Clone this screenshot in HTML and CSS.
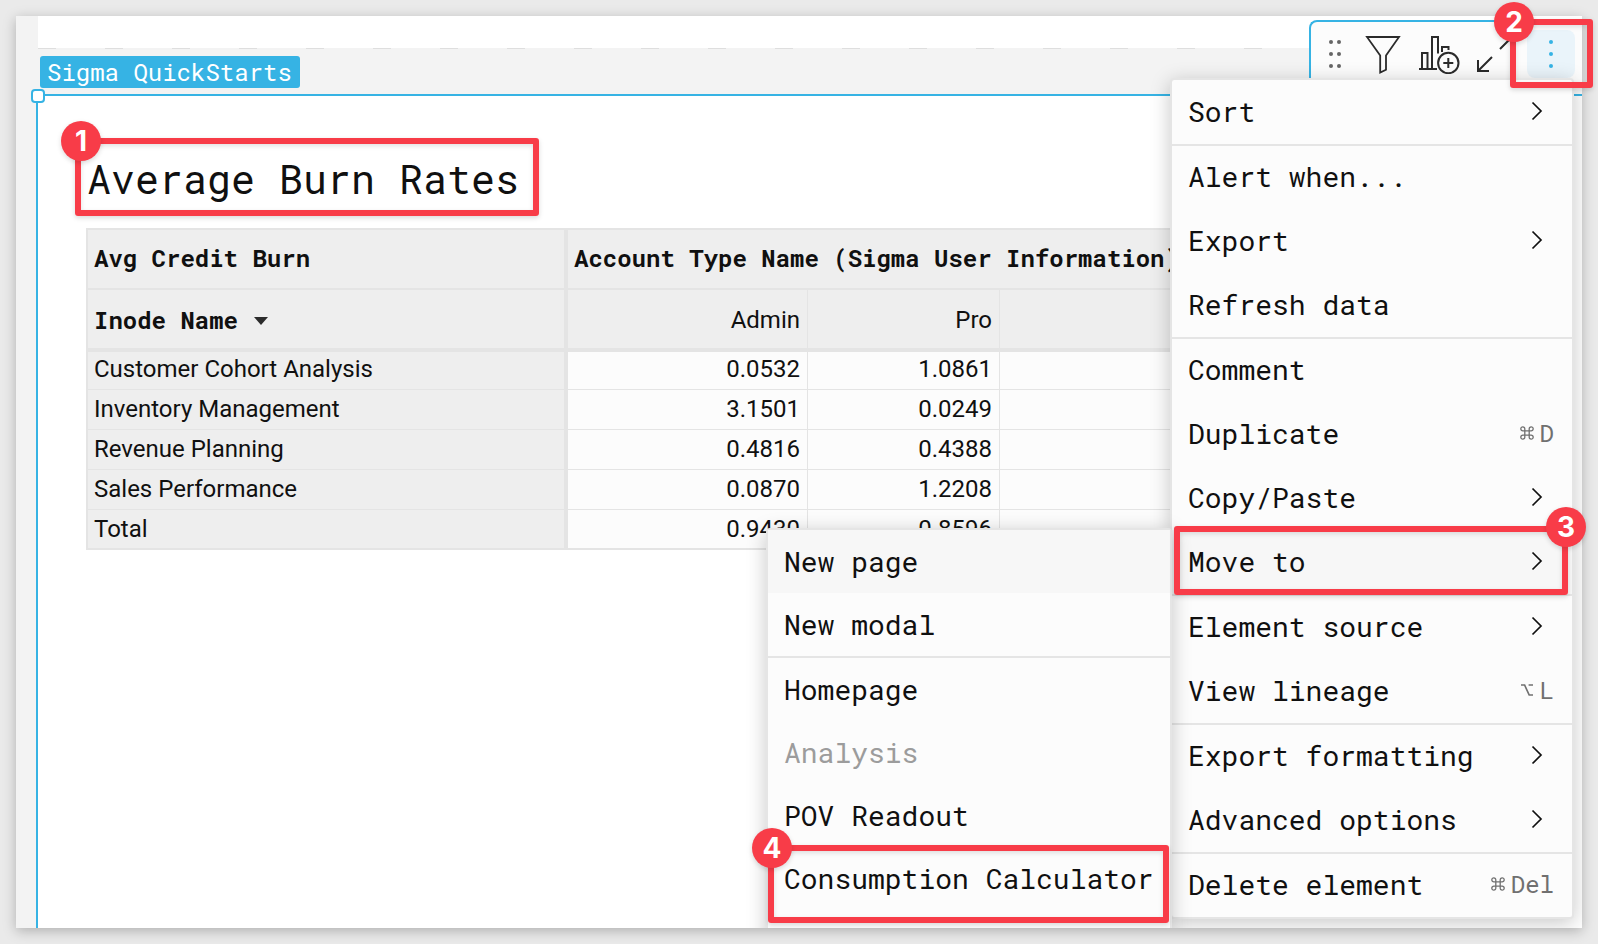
FILE: index.html
```html
<!DOCTYPE html>
<html lang="en">
<head>
<meta charset="utf-8">
<title>Sigma QuickStarts</title>
<link rel="stylesheet" href="styles.css">
</head>
<body>
<svg class="defs" aria-hidden="true">
  <symbol id="chevron" viewBox="0 0 12 20"><path d="M1.5 1.5 10 10l-8.500 8.500" fill="none" stroke="currentColor" stroke-width="1.700"/></symbol>
  <symbol id="command" viewBox="0 0 14 14"><path d="M4.800 4.800V2.900a2 2 0 1 0-2 1.900h8.400a2 2 0 1 0-2-1.900v8.200a2 2 0 1 0 2-1.900H2.800a2 2 0 1 0 2 1.900z" fill="none" stroke="currentColor" stroke-width="1.300"/></symbol>
  <symbol id="option" viewBox="0 0 14 14"><path d="M1 2h3.600l4.600 10H13M8.600 2H13" fill="none" stroke="currentColor" stroke-width="1.700"/></symbol>
</svg>

<main class="frame">
  <div class="strip"></div>
  <div class="dashes"></div>
  <div class="label-row"><span class="label">Sigma QuickStarts</span></div>

  <section class="element">
    <span class="handle"></span>
    <h1 class="title">Average Burn Rates</h1>
    <table class="pivot">
      <colgroup><col class="col-name"><col class="col-admin"><col class="col-pro"><col></colgroup>
      <thead>
        <tr class="head-top"><th scope="col">Avg Credit Burn</th><th scope="colgroup" colspan="3">Account Type Name (Sigma User Information)</th></tr>
        <tr class="head-sub">
          <th scope="col">Inode Name <svg class="caret" viewBox="0 0 14 8" width="14" height="8"><path d="M0 0h14L7 8z" fill="#2b2b2b"/></svg></th>
          <th class="num" scope="col">Admin</th><th class="num" scope="col">Pro</th><th></th>
        </tr>
      </thead>
      <tbody>
        <tr><th scope="row">Customer Cohort Analysis</th><td>0.0532</td><td>1.0861</td><td></td></tr>
        <tr><th scope="row">Inventory Management</th><td>3.1501</td><td>0.0249</td><td></td></tr>
        <tr><th scope="row">Revenue Planning</th><td>0.4816</td><td>0.4388</td><td></td></tr>
        <tr><th scope="row">Sales Performance</th><td>0.0870</td><td>1.2208</td><td></td></tr>
        <tr><th scope="row">Total</th><td>0.9430</td><td>0.8596</td><td></td></tr>
      </tbody>
    </table>
  </section>

  <div class="toolbar">
    <button class="tool drag" aria-label="Drag element">
      <svg width="12" height="28" viewBox="0 0 12 28" fill="#666"><circle cx="2" cy="2" r="2"/><circle cx="10" cy="2" r="2"/><circle cx="2" cy="14" r="2"/><circle cx="10" cy="14" r="2"/><circle cx="2" cy="26" r="2"/><circle cx="10" cy="26" r="2"/></svg>
    </button>
    <button class="tool filter" aria-label="Filter">
      <svg width="36" height="40" viewBox="0 0 36 40" fill="none" stroke="#2b2b2b" stroke-width="1.800"><path d="M2 3h32L21 21.500v14.200L15.200 38.500v-17z"/></svg>
    </button>
    <button class="tool chart" aria-label="Create child element">
      <svg width="42" height="40" viewBox="0 0 42 40" fill="none" stroke="#2b2b2b" stroke-width="2"><path d="M0 35h18M3 35V19h5.500v16M13 35V3h6v16.500M23 18v-5h6.500v3"/><circle cx="29.300" cy="29" r="10.200"/><path d="M24.300 29h10M29.300 24v10"/></svg>
    </button>
    <button class="tool expand" aria-label="Maximize">
      <svg width="38" height="38" viewBox="0 0 38 38" fill="none" stroke="#2b2b2b" stroke-width="2"><path d="M2 25v11h11M2.500 35.500 16 22M24 14 36 2M26 2h10v10"/></svg>
    </button>
    <button class="tool more" aria-label="More options">
      <svg width="4" height="28" viewBox="0 0 4 28" fill="#36b3e4"><circle cx="2" cy="2" r="2"/><circle cx="2" cy="14" r="2"/><circle cx="2" cy="26" r="2"/></svg>
    </button>
  </div>

  <nav class="menu main-menu" aria-label="Element menu">
    <button class="item">Sort<svg class="chev"><use href="#chevron"/></svg></button>
    <hr>
    <button class="item">Alert when...</button>
    <button class="item">Export<svg class="chev"><use href="#chevron"/></svg></button>
    <button class="item">Refresh data</button>
    <hr>
    <button class="item">Comment</button>
    <button class="item">Duplicate<span class="keys"><svg><use href="#command"/></svg>D</span></button>
    <button class="item">Copy/Paste<svg class="chev"><use href="#chevron"/></svg></button>
    <button class="item active">Move to<svg class="chev"><use href="#chevron"/></svg></button>
    <hr>
    <button class="item">Element source<svg class="chev"><use href="#chevron"/></svg></button>
    <button class="item">View lineage<span class="keys"><svg><use href="#option"/></svg>L</span></button>
    <hr>
    <button class="item">Export formatting<svg class="chev"><use href="#chevron"/></svg></button>
    <button class="item">Advanced options<svg class="chev"><use href="#chevron"/></svg></button>
    <hr>
    <button class="item">Delete element<span class="keys"><svg><use href="#command"/></svg>Del</span></button>
  </nav>

  <nav class="menu sub-menu" aria-label="Move to">
    <button class="item active">New page</button>
    <button class="item">New modal</button>
    <hr>
    <button class="item">Homepage</button>
    <button class="item" disabled>Analysis</button>
    <button class="item">POV Readout</button>
    <button class="item">Consumption Calculator</button>
  </nav>
</main>

<div class="callout callout-title"><span class="badge">1</span></div>
<div class="callout callout-more"><span class="badge">2</span></div>
<div class="callout callout-move"><span class="badge badge-right">3</span></div>
<div class="callout callout-target"><span class="badge">4</span></div>
</body>
</html>
```
FILE: styles.css
```css
:root {
  --mono: "Roboto Mono", "DejaVu Sans Mono", monospace;
  --sans: Roboto, sans-serif;
  --blue: #36b3e4;
  --red: #f83c48;
  --line: #e4e4e4;
  --ink: #101010;
}

* { box-sizing: border-box; }

body {
  position: relative;
  margin: 0;
  min-height: 100vh;
  padding: 16px;
  display: flex;
  background: #eaeaea;
  color: var(--ink);
  font-family: var(--mono);
  overflow: hidden;
}

button {
  margin: 0;
  padding: 0;
  border: 0;
  background: none;
  color: inherit;
  font: inherit;
}

.defs { position: absolute; width: 0; height: 0; }

.frame {
  position: relative;
  flex: 1;
  min-width: 0;
  display: flex;
  flex-direction: column;
  overflow: hidden;
  background: #f3f3f3;
  box-shadow: 0 3px 12px rgba(0, 0, 0, 0.25);
}

.strip { height: 32px; margin-left: 22px; background: #fff; }

.dashes {
  height: 1px;
  margin-left: 22px;
  background: repeating-linear-gradient(90deg, #dedede 0 18px, transparent 18px 67px);
}

.label-row { height: 45px; padding: 7px 0 0 24px; }

.label {
  display: inline-block;
  padding: 0 8px 0 7px;
  border-radius: 3px;
  background: var(--blue);
  color: #fff;
  font-size: 24px;
  line-height: 32px;
}

.element {
  position: relative;
  flex: 1;
  margin-left: 20px;
  padding: 55px 12px 0 48px;
  border-top: 2px solid var(--blue);
  border-left: 2px solid var(--blue);
  background: #fff;
}

.handle {
  position: absolute;
  top: -7px;
  left: -7px;
  width: 14px;
  height: 14px;
  border: 2px solid var(--blue);
  border-radius: 4px;
  background: #fff;
}

.title {
  margin: 0 0 21px;
  padding-left: 1px;
  font-size: 40px;
  font-weight: 400;
  line-height: 56px;
}

/* Pivot table */
.pivot {
  width: 100%;
  table-layout: fixed;
  border-collapse: separate;
  border-spacing: 0;
  border: 2px solid var(--line);
  border-right: 0;
  font-family: var(--sans);
  font-size: 24px;
  line-height: 36px;
}
.col-name { width: 480px; }
.col-admin { width: 240px; }
.col-pro { width: 192px; }

.pivot th, .pivot td {
  height: 40px;
  padding: 1px 7px 2px;
  border-bottom: 1px solid var(--line);
  border-right: 1px solid var(--line);
  font-weight: 400;
  text-align: right;
  white-space: nowrap;
  vertical-align: top;
}
.pivot th { background: #eee; }
.pivot td { background: #fcfcfc; }
.pivot tr > th:first-child {
  padding-left: 6px;
  border-right: 4px solid var(--line);
  text-align: left;
}
.pivot thead th {
  height: 60px;
  vertical-align: middle;
}
.pivot .head-top th {
  padding-top: 0;
  border-bottom-width: 2px;
  font-family: var(--mono);
  font-weight: 700;
  text-align: left;
}
.pivot .head-top th:last-child { padding-left: 6px; }
.pivot .head-sub th { height: 62px; padding-top: 4px; border-bottom-width: 4px; }
.pivot .head-sub th:first-child { font-family: var(--mono); font-weight: 700; }
.pivot tbody tr:first-child > * { height: 38px; padding-top: 0; padding-bottom: 1px; line-height: 35px; }
.pivot tbody tr:last-child > * { height: 38px; padding-bottom: 1px; border-bottom: 0; }
.caret { margin-left: 2px; vertical-align: 4px; }

/* Element toolbar */
.toolbar {
  position: absolute;
  top: 4px;
  right: 0;
  width: 273px;
  height: 74px;
  display: flex;
  align-items: flex-start;
  padding: 8px 7px 0 18px;
  border-top: 2px solid var(--blue);
  border-left: 2px solid var(--blue);
  border-radius: 8px 0 0 0;
  background: #fcfcfc;
}
.tool {
  height: 48px;
  display: flex;
  align-items: center;
}
.filter { margin-left: 24px; }
.chart { margin-left: 18px; }
.expand { margin-left: 15px; }
.more {
  width: 48px;
  margin-left: auto;
  justify-content: center;
  border-radius: 8px;
  background: #eaf4fa;
}

/* Menus */
.menu {
  position: absolute;
  display: flex;
  flex-direction: column;
  border: 2px solid #e5e5e5;
  border-radius: 4px;
  background: #fcfcfc;
  background-clip: padding-box;
  box-shadow: 0 4px 20px rgba(0, 0, 0, 0.22);
  font-size: 28px;
}
.menu hr {
  position: relative;
  width: 100%;
  height: 2px;
  margin: 0;
  border: 0;
  background: #e5e5e5;
}
.item {
  height: 64px;
  display: flex;
  align-items: center;
  justify-content: space-between;
  padding: 0 18px 2px 16px;
  text-align: left;
  white-space: nowrap;
}
.item.active { background: #f7f7f7; }
.item:disabled { color: #9c9c9c; }
.main-menu { top: 62px; right: 8px; width: 404px; }
.main-menu hr { margin-bottom: -1px; }
.sub-menu { top: 512px; right: 410px; width: 406px; height: 480px; }
.sub-menu .item { height: 63px; padding-bottom: 0; }
.chev { width: 12px; height: 20px; margin-right: 11px; }
.keys {
  display: flex;
  align-items: center;
  gap: 6px;
  color: #707070;
  font-size: 24px;
}
.keys svg { width: 14px; height: 14px; }

/* Numbered callouts */
.callout {
  position: absolute;
  border: 6px solid var(--red);
  border-radius: 3px;
  box-shadow: 0 2px 5px rgba(0, 0, 0, 0.15), inset 0 2px 5px rgba(0, 0, 0, 0.12);
}
.callout-title { top: 138px; left: 75px; width: 464px; height: 78px; }
.callout-more { top: 19px; right: 5px; width: 83px; height: 69px; }
.callout-move { top: 526px; right: 30px; width: 394px; height: 69px; }
.callout-target { top: 845px; right: 429px; width: 401px; height: 78px; }
.badge {
  position: absolute;
  top: -23px;
  left: -22px;
  width: 40px;
  height: 40px;
  border-radius: 50%;
  background: var(--red);
  color: #fff;
  font: 700 28px/40px Inter, sans-serif;
  text-align: center;
  box-shadow: 0 2px 5px rgba(0, 0, 0, 0.15);
}
.callout-title .badge { left: -20px; }
.badge-right { top: -25px; right: -24px; left: auto; }
```
